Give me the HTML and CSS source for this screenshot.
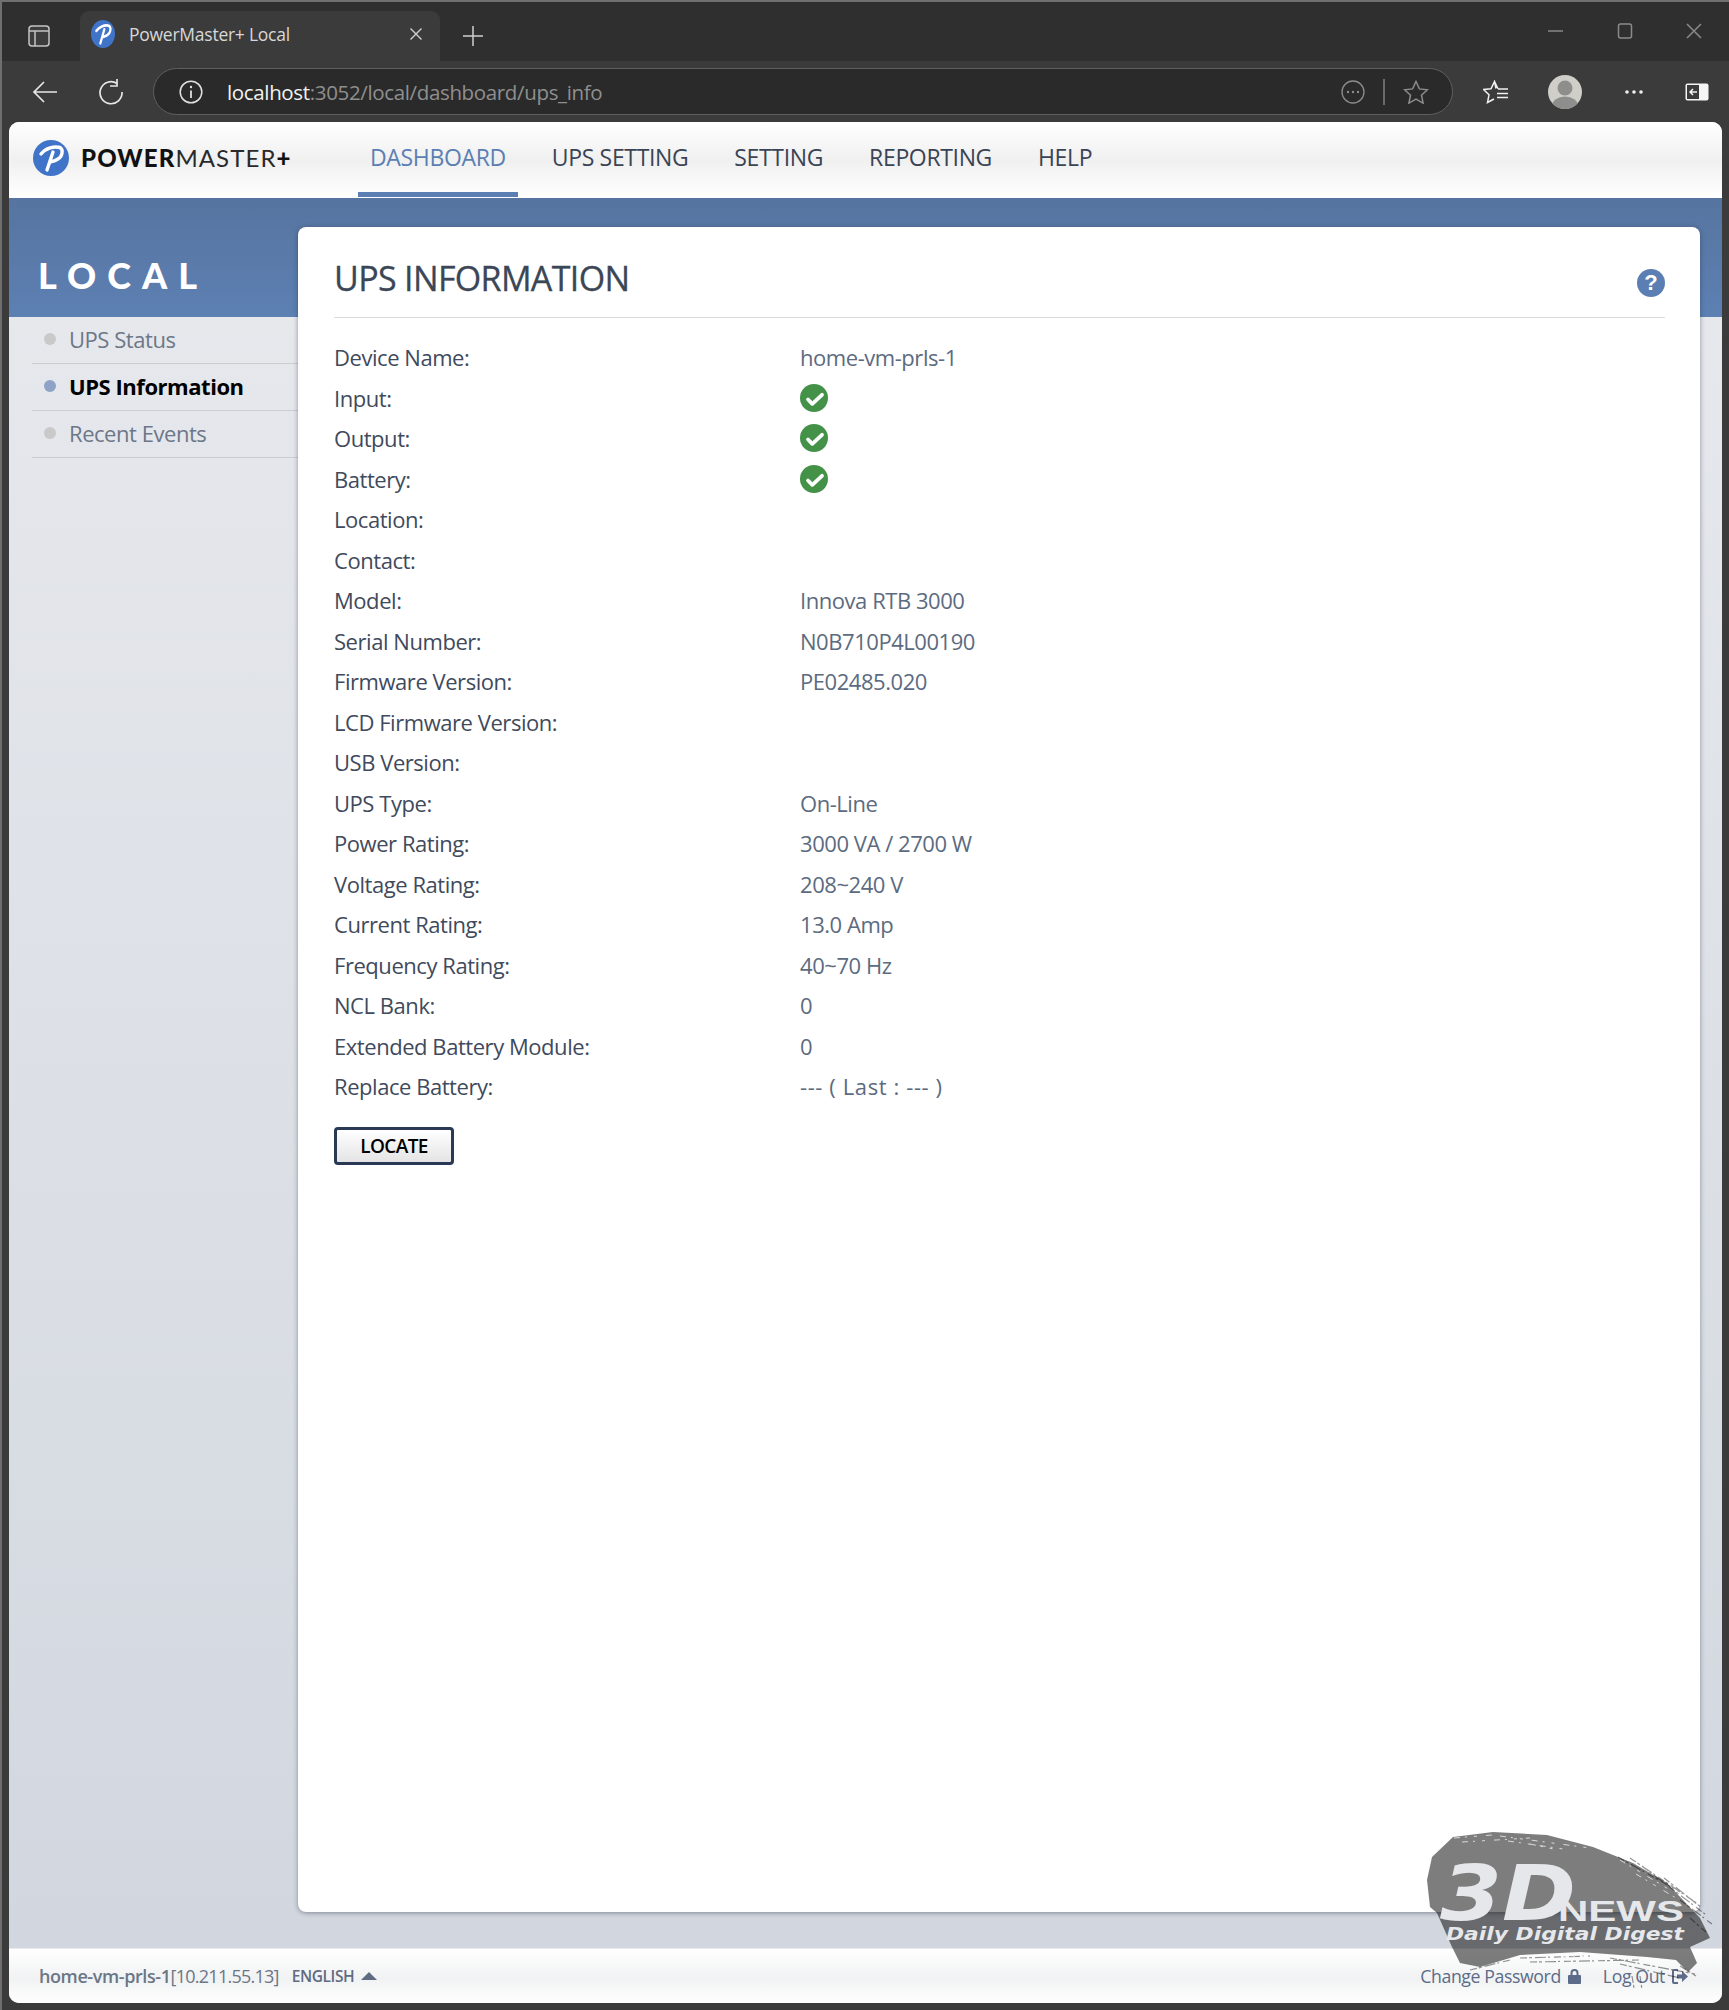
FILE: index.html
```html
<!DOCTYPE html>
<html lang="en">
<head>
<meta charset="utf-8">
<title>PowerMaster+ Local</title>
<link rel="stylesheet" href="styles.css">
</head>
<body>
<div class="window">
  <div class="tabstrip">
    <svg class="ic-tabs" width="22" height="22" viewBox="0 0 22 22"><rect x="1" y="1" width="20" height="20" rx="3" fill="#3d3d3d" stroke="#c4c4c4" stroke-width="1.5"/><path d="M1 6h20M7 6v15" stroke="#c4c4c4" stroke-width="1.5" fill="none"/></svg>
    <div class="tab">
      <svg class="favicon" width="24" height="28" viewBox="0 0 36 36" preserveAspectRatio="none"><circle cx="18" cy="18" r="18" fill="#3f74c9"/><path class="p-stroke" d="M8 14C13 8 21 6 27 7.500C31 10 29 17 25 19C22 21 19 21.500 17 22M20 12L14 30"/></svg>
      <span class="tab-title">PowerMaster+ Local</span>
      <svg class="tab-x" width="14" height="14" viewBox="0 0 14 14"><path d="M1.500 1.500l11 11M12.500 1.500l-11 11" stroke="#d0d0d0" stroke-width="1.400"/></svg>
    </div>
    <svg class="newtab" width="22" height="22" viewBox="0 0 22 22"><path d="M11 1v20M1 11h20" stroke="#cfcfcf" stroke-width="1.500"/></svg>
    <div class="winctl">
      <svg width="16" height="16" viewBox="0 0 16 16"><path d="M0 8h15" stroke="#8a8a8a" stroke-width="1.500"/></svg>
      <svg width="16" height="16" viewBox="0 0 16 16"><rect x="1.500" y="1" width="13" height="14" rx="2" fill="none" stroke="#8a8a8a" stroke-width="1.500"/></svg>
      <svg width="16" height="16" viewBox="0 0 16 16"><path d="M1 1l14 14M15 1L1 15" stroke="#8a8a8a" stroke-width="1.500"/></svg>
    </div>
  </div>

  <div class="toolbar">
    <svg class="ic-back" width="26" height="24" viewBox="0 0 26 24"><path d="M25 12H2M12 2L2 12l10 10" fill="none" stroke="#e6e6e6" stroke-width="1.700"/></svg>
    <svg class="ic-reload" width="26" height="26" viewBox="0 0 26 26"><path d="M19 4.500A11 11 0 1 0 24 13" fill="none" stroke="#e6e6e6" stroke-width="1.700"/><path d="M19 0v7h-7" fill="none" stroke="#e6e6e6" stroke-width="1.700"/></svg>
    <div class="address">
      <svg class="ic-info" width="24" height="24" viewBox="0 0 24 24"><circle cx="12" cy="12" r="10.800" fill="none" stroke="#e0e0e0" stroke-width="1.500"/><path d="M12 10.500V18" stroke="#e0e0e0" stroke-width="1.800"/><circle cx="12" cy="7" r="1.200" fill="#e0e0e0"/></svg>
      <span class="url"><span class="url-host">localhost</span>:3052/local/dashboard/ups_info</span>
      <svg class="ic-dots" width="24" height="24" viewBox="0 0 24 24"><circle cx="12" cy="12" r="11" fill="none" stroke="#8c8c8c" stroke-width="1.300"/><circle cx="7" cy="12" r="1.200" fill="#8c8c8c"/><circle cx="12" cy="12" r="1.200" fill="#8c8c8c"/><circle cx="17" cy="12" r="1.200" fill="#8c8c8c"/></svg>
      <span class="addr-sep"></span>
      <svg class="ic-star" width="26" height="24" viewBox="0 0 26 24"><path d="M13 1.500l3.400 7.400 8 .9-5.900 5.400 1.600 7.900-7.100-4-7.100 4 1.600-7.900L1.600 9.800l8-.9z" fill="none" stroke="#8c8c8c" stroke-width="1.500"/></svg>
    </div>
    <svg class="ic-fav" width="26" height="24" viewBox="0 0 26 24"><path d="M13 8.500L11.500 1.500 8 8.800.5 9.500 6 14.800 4.500 22.500 11 19M11.500 1.500L15 8.800M15 9h10M14 13.500h11M14 17.500h11" fill="none" stroke="#f0f0f0" stroke-width="1.500"/></svg>
    <svg class="ic-avatar" width="34" height="34" viewBox="0 0 34 34"><clipPath id="avc"><circle cx="17" cy="17" r="17"/></clipPath><circle cx="17" cy="17" r="17" fill="#cfcec9"/><g clip-path="url(#avc)" fill="#8e8e8c"><circle cx="17" cy="13" r="7.500"/><ellipse cx="17" cy="31" rx="13" ry="9.500"/></g></svg>
    <svg class="ic-more" width="20" height="6" viewBox="0 0 20 6"><circle cx="3" cy="3" r="1.800" fill="#f0f0f0"/><circle cx="10" cy="3" r="1.800" fill="#f0f0f0"/><circle cx="17" cy="3" r="1.800" fill="#f0f0f0"/></svg>
    <svg class="ic-split" width="24" height="18" viewBox="0 0 24 18"><rect x=".5" y=".5" width="23" height="17" rx="2" fill="#f5f5f5"/><rect x="2" y="2" width="12" height="14" fill="#3b3b3b"/><path d="M12 9H5M8 6L5 9l3 3" fill="none" stroke="#f5f5f5" stroke-width="1.500"/></svg>
  </div>

  <div class="page">
    <header class="nav">
      <div class="brand">
        <svg class="brand-mark" width="36" height="36" viewBox="0 0 36 36"><circle cx="18" cy="18" r="18" fill="#3f74c9"/><path class="p-stroke" d="M8 14C13 8 21 6 27 7.500C31 10 29 17 25 19C22 21 19 21.500 17 22M20 12L14 30"/></svg>
        <span class="brand-name"><b>POWER</b>MASTER<b>+</b></span>
      </div>
      <nav class="menu">
        <a class="menu-item is-active">DASHBOARD</a>
        <a class="menu-item">UPS SETTING</a>
        <a class="menu-item">SETTING</a>
        <a class="menu-item">REPORTING</a>
        <a class="menu-item">HELP</a>
      </nav>
    </header>

    <div class="main">
      <aside class="side">
        <div class="side-head">LOCAL</div>
        <ul class="side-list">
          <li class="side-item">UPS Status</li>
          <li class="side-item is-current">UPS Information</li>
          <li class="side-item">Recent Events</li>
        </ul>
      </aside>

      <section class="card">
        <div class="card-head">
          <h1 class="card-title">UPS INFORMATION</h1>
          <svg class="help" width="28" height="28" viewBox="0 0 28 28"><circle cx="14" cy="14" r="14" fill="#5b7fb3"/><text x="14" y="21" class="help-q">?</text></svg>
        </div>
        <div class="rows">
          <div class="row"><span class="lbl">Device Name:</span><span class="val">home-vm-prls-1</span></div>
          <div class="row"><span class="lbl">Input:</span><svg class="ok" width="28" height="28" viewBox="0 0 28 28"><circle cx="14" cy="14" r="14" fill="#439247"/><path class="ok-tick" d="M8 15.500l4.300 4.300 9.700-9"/></svg></div>
          <div class="row"><span class="lbl">Output:</span><svg class="ok" width="28" height="28" viewBox="0 0 28 28"><circle cx="14" cy="14" r="14" fill="#439247"/><path class="ok-tick" d="M8 15.500l4.300 4.300 9.700-9"/></svg></div>
          <div class="row"><span class="lbl">Battery:</span><svg class="ok" width="28" height="28" viewBox="0 0 28 28"><circle cx="14" cy="14" r="14" fill="#439247"/><path class="ok-tick" d="M8 15.500l4.300 4.300 9.700-9"/></svg></div>
          <div class="row"><span class="lbl">Location:</span></div>
          <div class="row"><span class="lbl">Contact:</span></div>
          <div class="row"><span class="lbl">Model:</span><span class="val">Innova RTB 3000</span></div>
          <div class="row"><span class="lbl">Serial Number:</span><span class="val">N0B710P4L00190</span></div>
          <div class="row"><span class="lbl">Firmware Version:</span><span class="val">PE02485.020</span></div>
          <div class="row"><span class="lbl">LCD Firmware Version:</span></div>
          <div class="row"><span class="lbl">USB Version:</span></div>
          <div class="row"><span class="lbl">UPS Type:</span><span class="val">On-Line</span></div>
          <div class="row"><span class="lbl">Power Rating:</span><span class="val">3000 VA / 2700 W</span></div>
          <div class="row"><span class="lbl">Voltage Rating:</span><span class="val">208~240 V</span></div>
          <div class="row"><span class="lbl">Current Rating:</span><span class="val">13.0 Amp</span></div>
          <div class="row"><span class="lbl">Frequency Rating:</span><span class="val">40~70 Hz</span></div>
          <div class="row"><span class="lbl">NCL Bank:</span><span class="val">0</span></div>
          <div class="row"><span class="lbl">Extended Battery Module:</span><span class="val">0</span></div>
          <div class="row"><span class="lbl">Replace Battery:</span><span class="val val-dashes">--- ( Last : --- )</span></div>
        </div>
        <button class="locate" type="button">LOCATE</button>
      </section>
    </div>

    <footer class="foot">
      <div class="foot-left">
        <span class="host"><b>home-vm-prls-1</b>[10.211.55.13]</span>
        <span class="lang">ENGLISH</span>
        <svg class="lang-arrow" width="16" height="8" viewBox="0 0 16 8"><path d="M8 0l8 8H0z" fill="#5f6b80"/></svg>
      </div>
      <div class="foot-right">
        <span class="foot-link">Change Password</span>
        <svg class="foot-ic" width="13" height="15" viewBox="0 0 13 15"><path d="M3.500 6V4a3 3 0 0 1 6 0v2" fill="none" stroke="#5b6b88" stroke-width="2"/><rect y="6" width="13" height="9" rx="1" fill="#5b6b88"/></svg>
        <span class="foot-link foot-logout">Log Out</span>
        <svg class="foot-ic" width="16" height="15" viewBox="0 0 16 15"><path d="M6 1H2a1 1 0 0 0-1 1v11a1 1 0 0 0 1 1h4" fill="none" stroke="#5b6b88" stroke-width="2"/><path d="M5 5.500h5V2l6 5.500-6 5.500V9.500H5z" fill="#5b6b88"/></svg>
      </div>
    </footer>
  </div>

  <svg class="watermark" width="349" height="210" viewBox="0 0 349 210">
    <path class="wm-shape" d="M73 37 113 32 167 35 213 47 253 63 287 83 303 100 320 118 330 138 310 147 317 163 308 172 296 160 267 157 200 152 140 155 100 167 80 163 72 147 57 113 50 107 47 80 52 57Z"/>
    <g class="wm-streaks">
      <path d="M238 57 300 92M250 58 318 104M262 66 325 114M284 78 322 108M300 100 332 124M310 118 326 132"/>
      <path d="M140 158 210 156M150 162 260 160M230 158 315 174M240 164 300 178M90 170 130 160M260 176 262 190M252 176 254 188M300 166 316 176"/>
    </g>
    <g class="wm-specks">
      <path d="M74 38 112 35M82 42 150 38M120 36 210 48M128 41 190 50M150 44 178 50M240 60 290 90M256 74 296 98M150 156 250 158M170 155 280 159"/>
    </g>
    <text class="wm-3d" x="60" y="120" textLength="136" lengthAdjust="spacingAndGlyphs">3D</text>
    <text class="wm-news" x="178" y="121" textLength="126" lengthAdjust="spacingAndGlyphs">NEWS</text>
    <text class="wm-tag" x="66" y="140" textLength="238" lengthAdjust="spacingAndGlyphs">Daily Digital Digest</text>
  </svg>
</div>
</body>
</html>
```

FILE: styles.css
```css
* { box-sizing: border-box; }
html, body { margin: 0; padding: 0; }
body { font-family: "Open Sans", "Noto Sans", sans-serif; background: #3a3a3a; }

.window {
  position: relative;
  width: 1729px;
  height: 2010px;
  overflow: hidden;
  background: #3b3b3b;
  border-left: 2px solid #6f6f6f;
  border-top: 2px solid #6f6f6f;
  display: flex;
  flex-direction: column;
}

/* browser chrome */
.tabstrip {
  height: 59px;
  flex: none;
  background: #2f2f2f;
  display: flex;
  align-items: flex-end;
  padding-left: 26px;
}
.ic-tabs { margin: 0 36px 14px 0; }
.tab {
  width: 360px;
  height: 50px;
  background: #3b3b3b;
  border-radius: 9px 9px 0 0;
  display: flex;
  align-items: center;
  padding: 0 17px 4px 11px;
  margin-left: -6px;
}
.favicon { flex: none; }
.tab-title {
  margin-left: 14px;
  flex: 1;
  font-size: 17.500px;
  letter-spacing: -.25px;
  color: #d8d8d8;
}
.newtab { margin: 0 0 14px 22px; }
.winctl {
  margin-left: auto;
  display: flex;
  gap: 53px;
  padding-right: 27px;
  margin-bottom: 22px;
}

.toolbar {
  height: 61px;
  flex: none;
  display: flex;
  align-items: center;
  padding-left: 30px;
  background: #3b3b3b;
}
.ic-reload { margin-left: 40px; }
.address {
  width: 1300px;
  height: 47px;
  margin-left: 29px;
  border: 1.500px solid #5f5f5f;
  border-radius: 24px;
  background: #2a2a2a;
  display: flex;
  align-items: center;
  padding-left: 25px;
}
.url {
  margin-left: 24px;
  flex: 1;
  font-size: 20.500px;
  letter-spacing: -.35px;
  color: #8f8f8f;
}
.url-host { color: #f2f2f2; }
.addr-sep { width: 2px; height: 26px; margin: 0 18px 0 18px; background: #6a6a6a; }
.ic-star { margin-right: 23px; }
.ic-fav { margin-left: 30px; }
.ic-avatar { margin-left: 39px; }
.ic-more { margin-left: 42px; }
.ic-split { margin-left: 41px; }

/* page */
.page {
  width: 1713px;
  height: 1881px;
  flex: none;
  margin-left: 7px;
  border-radius: 10px;
  overflow: hidden;
  display: flex;
  flex-direction: column;
  background: #fff;
}
.nav {
  height: 76px;
  flex: none;
  background: linear-gradient(#fff 0, #f0f0f0 50%, #fff 100%);
  display: flex;
}
.brand { display: flex; align-items: center; padding: 0 0 5px 24px; width: 349px; }
.brand-mark { flex: none; }
.p-stroke { fill: none; stroke: #fff; stroke-width: 3.400; stroke-linecap: round; stroke-linejoin: round; }
.brand-name {
  margin-left: 12px;
  font-family: "Lato", sans-serif;
  font-size: 24px;
  letter-spacing: 1.100px;
  color: #2a2a2a;
  white-space: nowrap;
}
.brand-name b { color: #111; font-weight: 900; }
.menu { display: flex; align-items: flex-start; }
.menu-item {
  height: 75px;
  padding: 0 12px;
  margin-right: 22px;
  display: flex;
  align-items: center;
  font-size: 23px;
  letter-spacing: -.35px;
  color: #3a4454;
  border-bottom: 5px solid transparent;
}
.menu-item.is-active { color: #5b7fb3; border-bottom-color: #5b7fb3; }

.main {
  flex: 1;
  display: flex;
  background:
    linear-gradient(#56749f, #5d80b3) 0 0 / 100% 119px no-repeat,
    linear-gradient(#e7e9ed, #d2d7df);
}
.side { width: 289px; flex: none; }
.side-head {
  height: 119px;
  padding: 55px 0 0 29px;
  font-family: "Lato", sans-serif;
  font-weight: 900;
  font-size: 36px;
  line-height: 44px;
  letter-spacing: 11px;
  color: #fff;
}
.side-list { list-style: none; margin: 0 0 0 23px; padding: 0; }
.side-item {
  height: 47px;
  display: flex;
  align-items: center;
  gap: 13px;
  padding: 0 0 2px 12px;
  border-bottom: 1px solid #c9ccd1;
  font-size: 22px;
  letter-spacing: -.45px;
  color: #6c7788;
}
.side-item::before {
  content: "";
  width: 12px;
  height: 12px;
  border-radius: 50%;
  background: #c9c9c9;
  flex: none;
}
.side-item.is-current { color: #000; font-weight: 700; letter-spacing: -.45px; }
.side-item.is-current::before { background: #8ea3c6; }

.card {
  flex: 1;
  margin: 29px 22px 36px 0;
  padding: 0 35px 0 36px;
  background: #fff;
  border-radius: 8px;
  box-shadow: 0 1px 5px rgba(30, 40, 60, .45);
}
.card-head {
  height: 91px;
  border-bottom: 1px solid #dcdcdc;
  display: flex;
  justify-content: space-between;
  align-items: flex-start;
}
.card-title {
  margin: 29px 0 0;
  font-size: 34px;
  line-height: 45px;
  font-weight: 400;
  letter-spacing: -.65px;
  color: #3b4656;
  -webkit-text-stroke: .3px #3b4656;
}
.help { margin-top: 42px; }
.help-q {
  font-family: "Liberation Sans", sans-serif;
  font-weight: 700;
  font-size: 22px;
  fill: #fff;
  text-anchor: middle;
}
.rows { margin-top: 19px; }
.row {
  height: 40.500px;
  display: grid;
  grid-template-columns: 466px 1fr;
  align-items: center;
  font-size: 22px;
  letter-spacing: -.45px;
}
.lbl { color: #3f4a5c; }
.val { color: #5c6b80; }
.val-dashes { letter-spacing: .6px; }
.ok-tick { fill: none; stroke: #fff; stroke-width: 3.800; stroke-linecap: round; stroke-linejoin: round; }
.locate {
  display: block;
  margin-top: 20px;
  width: 120px;
  height: 38px;
  border: 3px solid #2a3a56;
  border-radius: 4px;
  background: linear-gradient(#fff, #e4e4e4);
  font-family: inherit;
  font-size: 19px;
  font-weight: 600;
  letter-spacing: -.6px;
  color: #000;
  padding: 0;
}

.foot {
  height: 55px;
  flex: none;
  background: linear-gradient(#fff 0, #f1f2f3 55%, #fff 100%);
  border-top: 1px solid #e8eaee;
  display: flex;
  align-items: center;
  justify-content: space-between;
  padding: 0 34px 0 30px;
}
.foot-left, .foot-right { display: flex; align-items: center; }
.host { font-size: 18px; letter-spacing: -.75px; color: #6b7686; }
.host b { font-weight: 600; letter-spacing: -.4px; }
.lang { margin-left: 13px; font-size: 15.500px; font-weight: 600; letter-spacing: -.4px; color: #5f6b80; }
.lang-arrow { margin-left: 7px; }
.foot-link { font-size: 17.700px; letter-spacing: -.4px; color: #5b6b88; }
.foot-ic { margin-left: 7px; }
.foot-logout { margin-left: 22px; }

/* watermark sits over the page corner */
.watermark { position: absolute; right: 0; bottom: 0; }
.wm-shape { fill: #000; fill-opacity: .51; }
.wm-streaks path { fill: none; stroke: #000; stroke-opacity: .42; stroke-width: 1.200; stroke-dasharray: 7 2 3 3 11 2 2 4; }
.wm-specks path { fill: none; stroke: #fff; stroke-opacity: .7; stroke-width: 1; stroke-dasharray: 6 5 2 7 3 9; }
.wm-3d {
  font-family: "DejaVu Sans", sans-serif;
  font-weight: 700;
  font-style: italic;
  font-size: 76px;
  fill: #e5e7ea;
}
.wm-news {
  font-family: "Liberation Sans", sans-serif;
  font-weight: 700;
  font-size: 30px;
  fill: #e5e7ea;
}
.wm-tag {
  font-family: "DejaVu Sans", sans-serif;
  font-weight: 700;
  font-style: italic;
  font-size: 18px;
  fill: #e5e7ea;
}
```
